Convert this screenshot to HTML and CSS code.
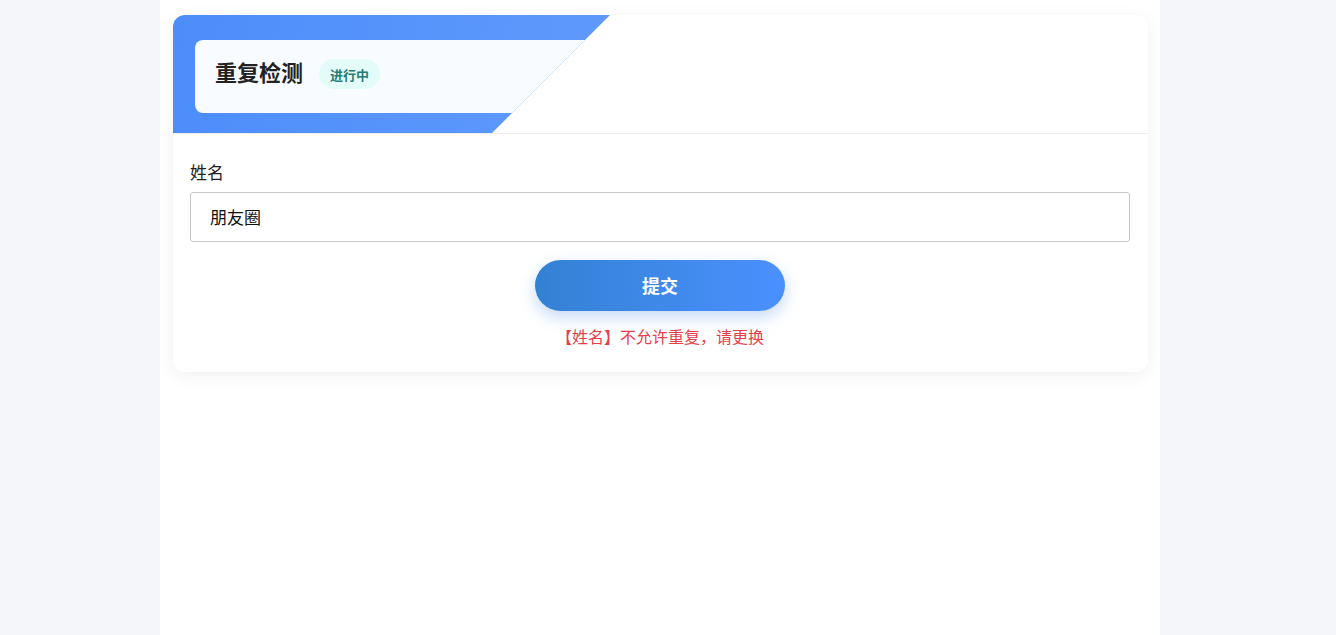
FILE: index.html
```html
<!DOCTYPE html>
<html lang="zh-CN">
<head>
<meta charset="utf-8">
<title>重复检测</title>
<link rel="stylesheet" href="styles.css">
</head>
<body>
<div class="page">
  <div class="card">
    <div class="card-head">
      <div class="head-bg">
        <div class="head-box">
          <h1 class="title">重复检测</h1>
          <span class="badge">进行中</span>
        </div>
      </div>
    </div>
    <div class="card-body">
      <label class="label">姓名</label>
      <div class="input">朋友圈</div>
      <div class="actions">
        <button class="submit">提交</button>
      </div>
      <p class="error">【姓名】不允许重复，请更换</p>
    </div>
  </div>
</div>
</body>
</html>
```

FILE: styles.css
```css
* { box-sizing: border-box; }
html, body {
  margin: 0;
  padding: 0;
  background: #f5f6fa;
  font-family: "Noto Sans CJK SC", "Noto Sans", sans-serif;
}
body {
  padding-right: 16px;
}
.page {
  width: 1000px;
  min-height: 635px;
  margin: 0 auto;
  background: #fff;
  padding: 15px 12px 0 13px;
}
.card {
  background: #fff;
  border-radius: 12px;
  box-shadow: 0 4px 18px rgba(0, 0, 0, 0.06);
  overflow: hidden;
}
.card-head {
  border-bottom: 1px solid #eeeeee;
}
.head-bg {
  height: 118px;
  padding: 25px 0 20px 22px;
  background: linear-gradient(100deg, #4d8dfa 0%, #74aaff 100%);
  clip-path: polygon(0 0, 437px 0, 319px 100%, 0 100%);
}
.head-box {
  height: 73px;
  background: #f8fbff;
  border-radius: 8px;
  display: flex;
  align-items: center;
  padding-left: 20px;
  gap: 16px;
}
.title {
  margin: 0 0 12px;
  font-size: 22px;
  font-weight: 700;
  color: #222;
  line-height: 1;
}
.badge {
  display: inline-flex;
  align-items: center;
  height: 30px;
  padding: 0 11px;
  border-radius: 15px;
  background: #e3fcf8;
  color: #267a78;
  font-size: 13px;
  font-weight: 700;
  margin-bottom: 5px;
}
.card-body {
  padding: 26px 18px 24px 17px;
  display: flex;
  flex-direction: column;
}
.label {
  font-size: 17px;
  line-height: 24px;
  color: #222;
  margin-bottom: 8px;
}
.input {
  height: 50px;
  border: 1px solid #c8c8c8;
  border-radius: 3px;
  padding-left: 19px;
  padding-bottom: 2px;
  display: flex;
  align-items: center;
  font-size: 17px;
  color: #111;
}
.actions {
  display: flex;
  justify-content: center;
  margin-top: 18px;
}
.submit {
  width: 250px;
  height: 51px;
  border: none;
  border-radius: 26px;
  background: linear-gradient(90deg, #3381d3 0%, #4b90ff 100%);
  color: #fff;
  font-family: inherit;
  font-size: 18px;
  font-weight: 700;
  padding-bottom: 3px;
  box-shadow: 0 6px 16px rgba(60, 130, 230, 0.3);
}
.error {
  margin: 13px 0 0;
  text-align: center;
  font-size: 16px;
  line-height: 24px;
  color: #e43f4b;
}
```
